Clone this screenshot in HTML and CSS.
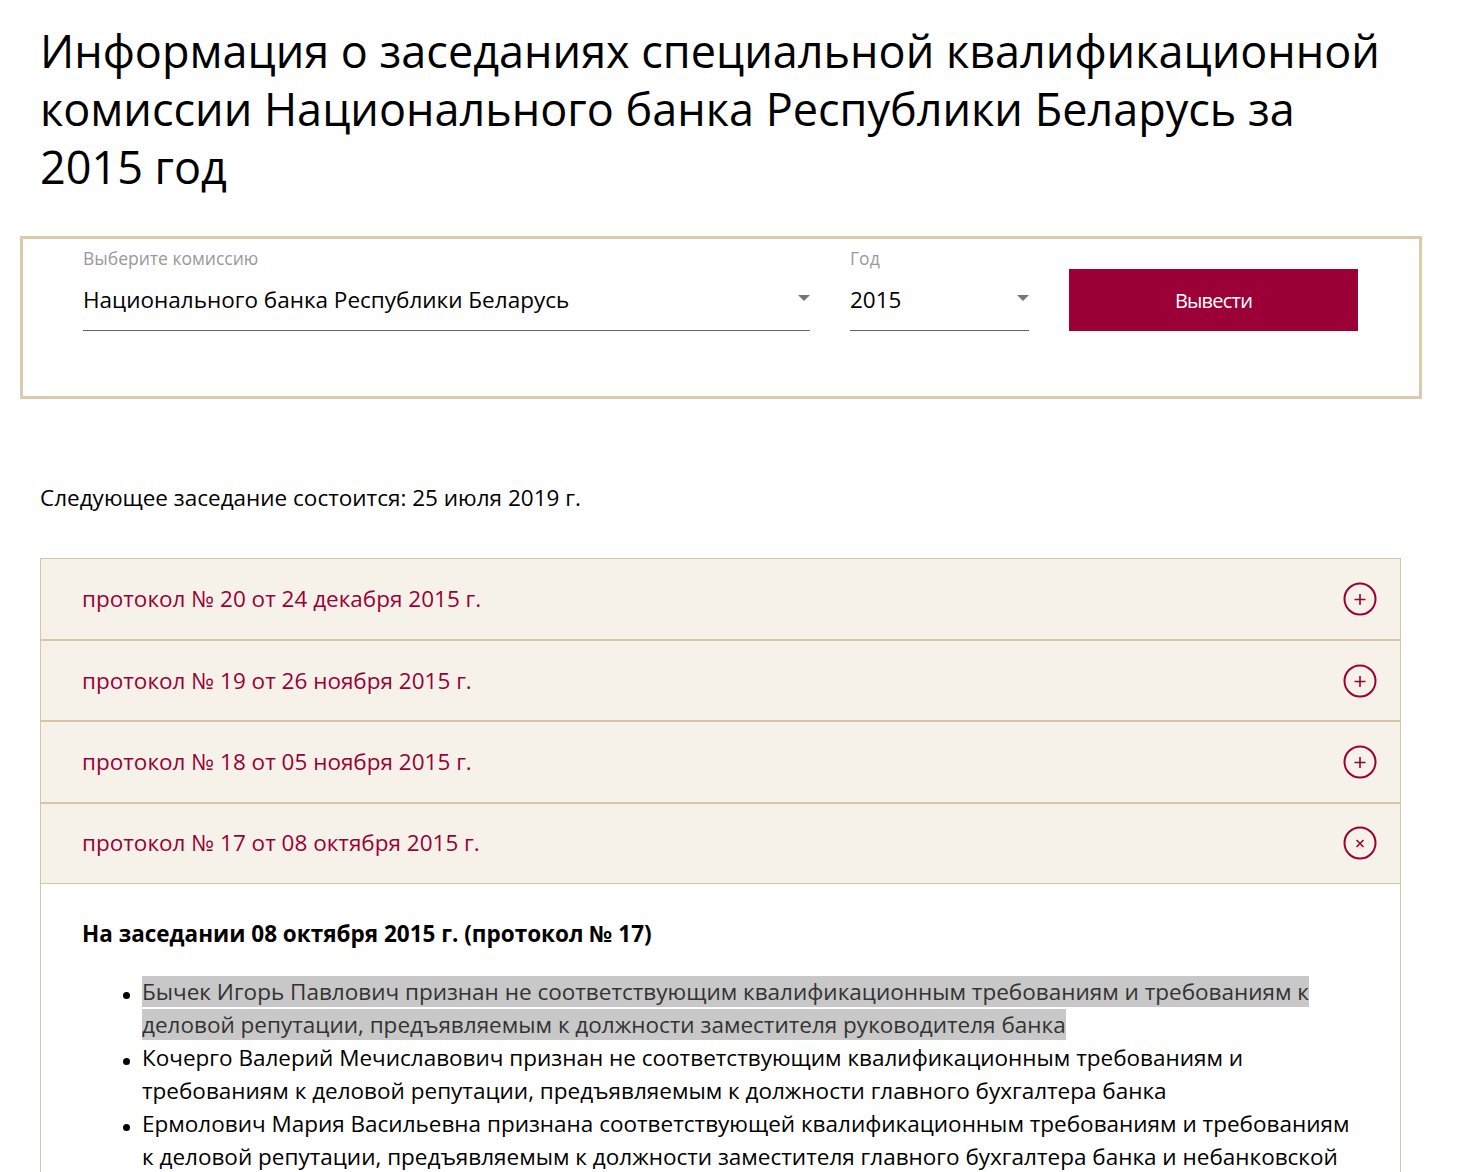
FILE: index.html
```html
<!DOCTYPE html>
<html lang="ru">
<head>
<meta charset="utf-8">
<title>Информация о заседаниях</title>
<link rel="stylesheet" href="styles.css">
</head>
<body>
<div class="page">
  <h1 class="title">Информация о заседаниях специальной квалификационной комиссии Национального банка Республики Беларусь за 2015 год</h1>

  <form class="filter">
    <div class="field field-commission">
      <div class="field-label">Выберите комиссию</div>
      <div class="select">
        <span class="select-value">Национального банка Республики Беларусь</span>
        <span class="select-arrow"></span>
      </div>
    </div>
    <div class="field field-year">
      <div class="field-label">Год</div>
      <div class="select">
        <span class="select-value">2015</span>
        <span class="select-arrow"></span>
      </div>
    </div>
    <button type="button" class="submit">Вывести</button>
  </form>

  <p class="next-meeting">Следующее заседание состоится: 25 июля 2019 г.</p>

  <div class="accordion">
    <div class="acc-item">
      <div class="acc-head">
        <span class="acc-title">протокол № 20 от 24 декабря 2015 г.</span>
        <span class="acc-icon"><svg width="34" height="34" viewBox="0 0 34 34"><circle cx="17" cy="17" r="15.5" fill="none" stroke="#9b0036" stroke-width="2"/><path d="M11.5 17.5h11M17 12v11" stroke="#9b0036" stroke-width="1.6" fill="none"/></svg></span>
      </div>
    </div>
    <div class="acc-item">
      <div class="acc-head">
        <span class="acc-title">протокол № 19 от 26 ноября 2015 г.</span>
        <span class="acc-icon"><svg width="34" height="34" viewBox="0 0 34 34"><circle cx="17" cy="17" r="15.5" fill="none" stroke="#9b0036" stroke-width="2"/><path d="M11.5 17.5h11M17 12v11" stroke="#9b0036" stroke-width="1.6" fill="none"/></svg></span>
      </div>
    </div>
    <div class="acc-item">
      <div class="acc-head">
        <span class="acc-title">протокол № 18 от 05 ноября 2015 г.</span>
        <span class="acc-icon"><svg width="34" height="34" viewBox="0 0 34 34"><circle cx="17" cy="17" r="15.5" fill="none" stroke="#9b0036" stroke-width="2"/><path d="M11.5 17.5h11M17 12v11" stroke="#9b0036" stroke-width="1.6" fill="none"/></svg></span>
      </div>
    </div>
    <div class="acc-item open">
      <div class="acc-head">
        <span class="acc-title">протокол № 17 от 08 октября 2015 г.</span>
        <span class="acc-icon"><svg width="34" height="34" viewBox="0 0 34 34"><circle cx="17" cy="17" r="15.5" fill="none" stroke="#9b0036" stroke-width="2"/><path d="M13.5 14l7 7M20.5 14l-7 7" stroke="#9b0036" stroke-width="1.6" fill="none"/></svg></span>
      </div>
      <div class="acc-body">
        <p class="body-heading">На заседании 08 октября 2015 г. (протокол № 17)</p>
        <ul class="decisions">
          <li><span class="marked">Бычек Игорь Павлович признан не соответствующим квалификационным требованиям и требованиям к деловой репутации, предъявляемым к должности заместителя руководителя банка</span></li>
          <li>Кочерго Валерий Мечиславович признан не соответствующим квалификационным требованиям и требованиям к деловой репутации, предъявляемым к должности главного бухгалтера банка</li>
          <li>Ермолович Мария Васильевна признана соответствующей квалификационным требованиям и требованиям к деловой репутации, предъявляемым к должности заместителя главного бухгалтера банка и небанковской кредитно-финансовой организации</li>
        </ul>
      </div>
    </div>
  </div>
</div>
</body>
</html>
```

FILE: styles.css
```css
* {
  box-sizing: border-box;
}

html, body {
  margin: 0;
  padding: 0;
  background: #ffffff;
  overflow: hidden;
}

body {
  font-family: "Open Sans", "Noto Sans", sans-serif;
  color: #000000;
}

.page {
  padding: 0 57px 0 40px;
}

.title {
  margin: 0;
  padding-top: 22px;
  font-size: 45px;
  line-height: 58px;
  font-weight: 400;
}

.filter {
  margin: 40px -21px 0 -20px;
  border: 3px solid #dccbab;
  padding: 7px 59px 65px 60px;
  display: flex;
  align-items: flex-end;
  gap: 40px;
}

.field {
  flex-shrink: 0;
}

.field-commission {
  width: 727px;
}

.field-year {
  width: 179px;
}

.field-label {
  font-size: 17.5px;
  line-height: 24px;
  color: #999999;
  margin-bottom: 14px;
}

.select {
  position: relative;
  border-bottom: 1px solid #666666;
  padding-bottom: 15px;
  font-size: 22.5px;
  line-height: 31px;
  color: #000000;
}

.select-arrow {
  position: absolute;
  right: 0;
  top: 11px;
  width: 0;
  height: 0;
  border-left: 6px solid transparent;
  border-right: 6px solid transparent;
  border-top: 6px solid #777777;
}

.submit {
  flex-shrink: 0;
  width: 289px;
  height: 62px;
  border: none;
  background: #9b0036;
  color: #ffffff;
  font-family: "Open Sans", sans-serif;
  font-size: 20px;
  letter-spacing: -0.8px;
  padding-top: 2px;
  cursor: pointer;
}

.next-meeting {
  margin: 84px 0 0;
  font-size: 22.5px;
  line-height: 30px;
}

.accordion {
  margin-top: 45px;
  border-top: 1px solid #d6c6a4;
  border-left: 1px solid #d6c6a4;
  border-right: 1px solid #d6c6a4;
}

.acc-item + .acc-item {
  border-top: 2px solid #d6c6a4;
}

.acc-head {
  height: 79.7px;
  background: #f6f2e9;
  display: flex;
  align-items: center;
  justify-content: space-between;
  padding: 0 23px 0 41px;
}

.acc-title {
  font-size: 22.5px;
  line-height: 30px;
  color: #9b0036;
}

.acc-icon {
  display: flex;
  width: 34px;
  height: 34px;
}

.acc-item.open .acc-head {
  border-bottom: 1px solid #d6c6a4;
  height: 79.7px;
}

.acc-body {
  background: #ffffff;
  padding: 35px 41px 40px 41px;
}

.body-heading {
  margin: 0;
  font-size: 22.5px;
  line-height: 30px;
  font-weight: 700;
}

.decisions {
  margin: 26px 0 0;
  padding-left: 60px;
  font-size: 22.5px;
  line-height: 33px;
  list-style: none;
}

.decisions li {
  position: relative;
}

.decisions li::before {
  content: "";
  position: absolute;
  left: -19px;
  top: 17px;
  width: 7px;
  height: 7px;
  border-radius: 50%;
  background: #000000;
}

.marked {
  background: #c8c8c8;
  color: #333333;
}
```
